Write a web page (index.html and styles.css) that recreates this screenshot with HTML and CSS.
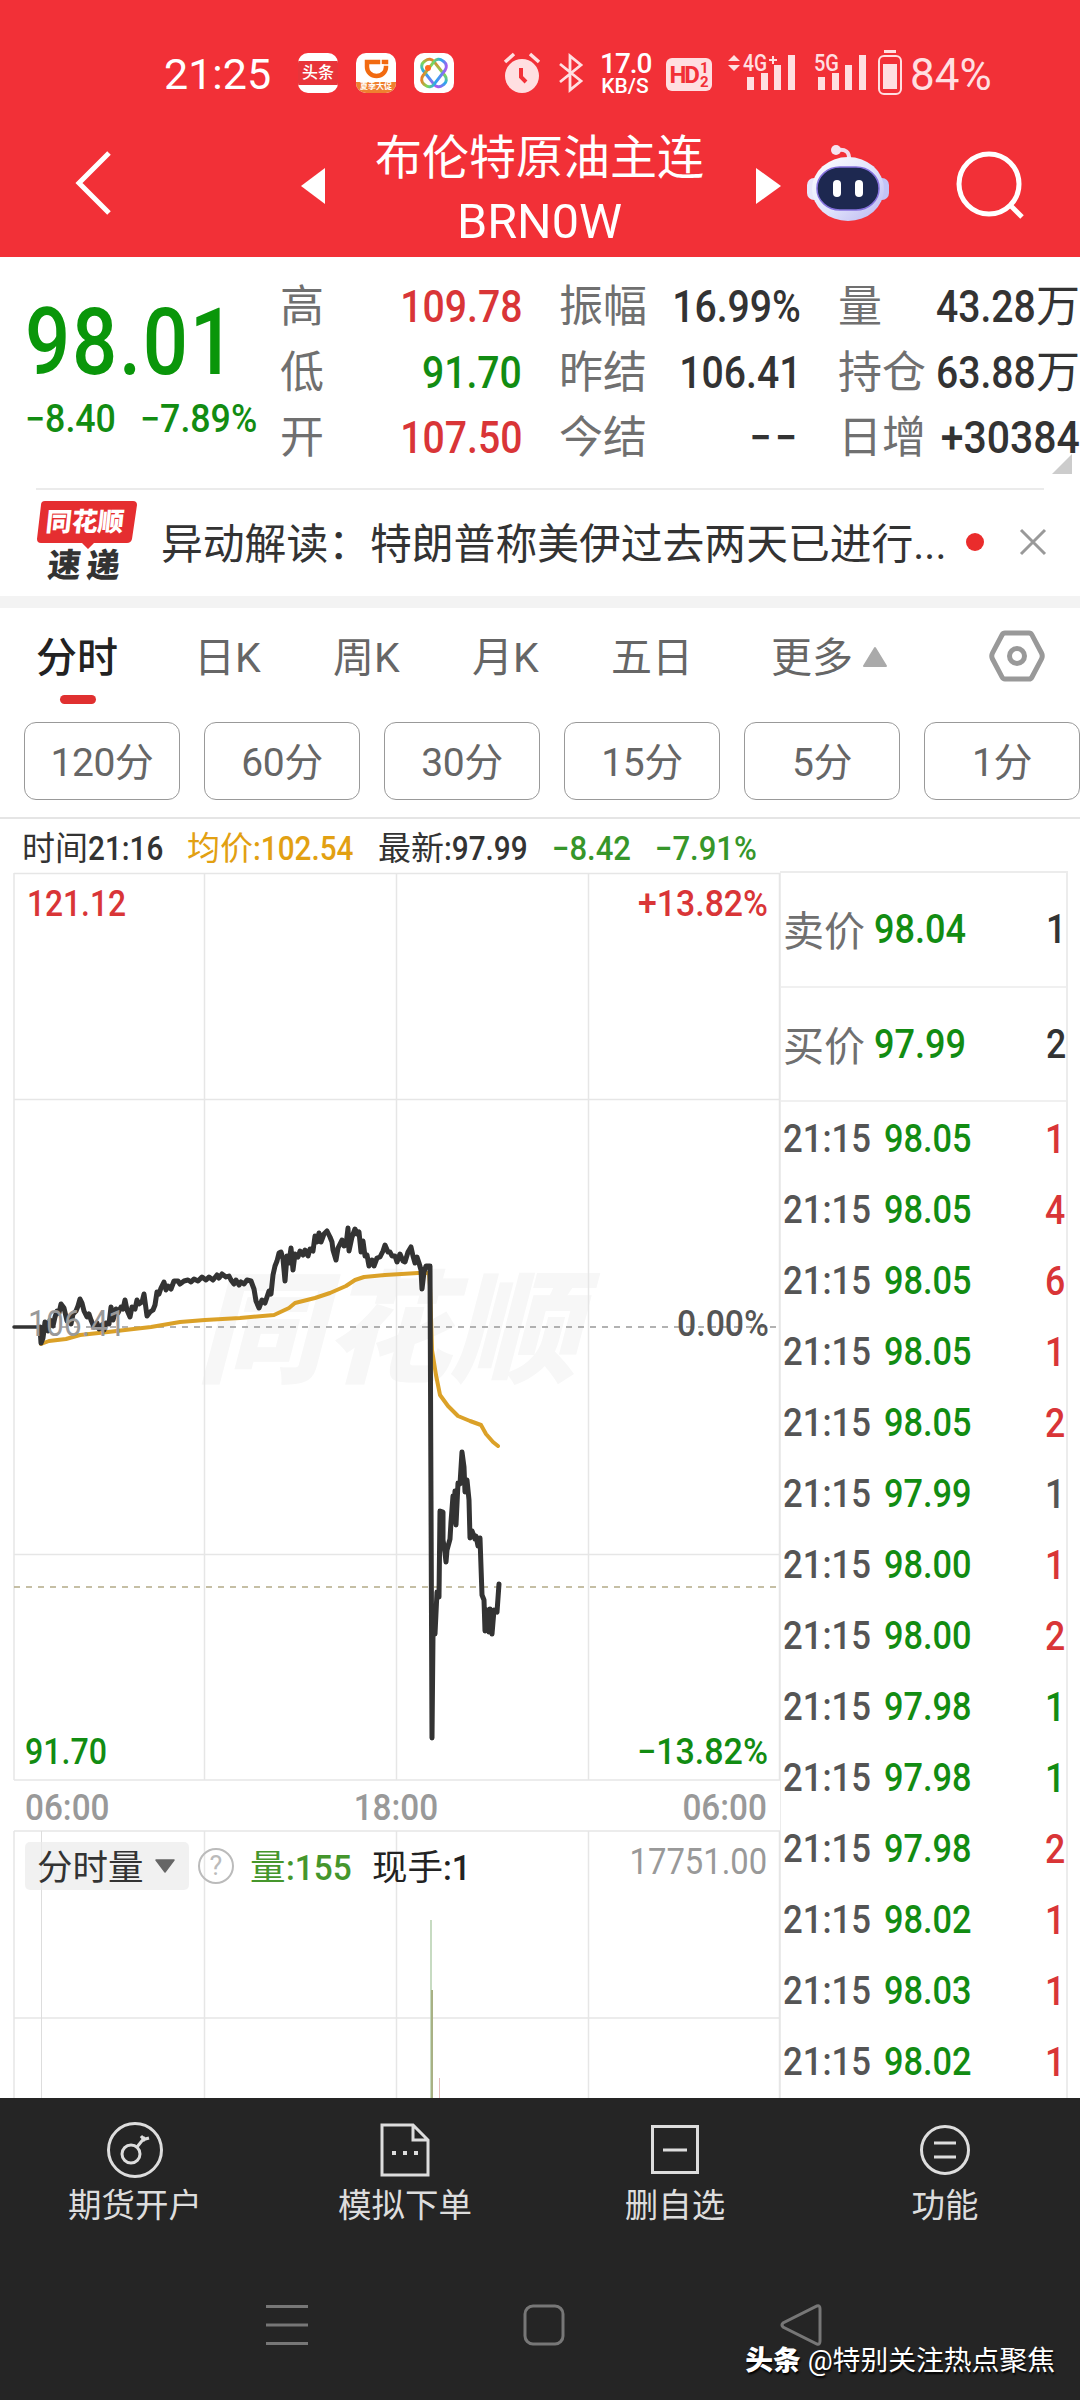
FILE: index.html
```html
<!DOCTYPE html>
<html lang="zh-CN">
<head>
    <meta charset="UTF-8">
    <meta name="viewport" content="width=device-width, initial-scale=1.0">
    <title>布伦特原油主连</title>
    <link rel="stylesheet" href="styles.css">
</head>
<body>

    <header class="top">
        <div class="status">
            <span class="clock">21:25</span>
            <div class="apps">
                <span class="app app-news"><b>头条</b></span>
                <span class="app app-ride">
                    <svg width="40" height="40" viewBox="0 0 40 40"><path d="M11 9h19v5a9.500 9 0 0 1-19 0z" fill="none" stroke="#f26a10" stroke-width="4.500"/><path d="M25 6v6h8" fill="none" stroke="#fff" stroke-width="1.5"/></svg>
                    <b>夏季大促</b>
                </span>
                <span class="app">
                    <svg width="40" height="40" viewBox="0 0 40 40">
                        <defs><linearGradient id="rainbow" x1="0" y1="0" x2="1" y2="1"><stop offset="0" stop-color="#ff6a20"/><stop offset=".35" stop-color="#7ed957"/><stop offset=".65" stop-color="#28a8f0"/><stop offset="1" stop-color="#c04cf0"/></linearGradient></defs>
                        <g fill="none" stroke="url(#rainbow)" stroke-width="3"><rect x="5" y="13" width="30" height="14" rx="6" transform="rotate(52 20 20)"/><rect x="5" y="13" width="30" height="14" rx="6" transform="rotate(-52 20 20)"/></g>
                        <circle cx="14" cy="15" r="3" fill="#ff6a20"/>
                    </svg>
                </span>
            </div>
            <svg class="alarm" width="36" height="42" viewBox="0 0 36 42"><circle cx="18" cy="24" r="17" fill="#ffdfe1"/><path d="M1 10l9-8M35 10l-9-8" stroke="#ffdfe1" stroke-width="3.5"/><path d="M17 16v9l5 5" fill="none" stroke="#f23037" stroke-width="4"/></svg>
            <svg class="bluetooth" width="24" height="38" viewBox="0 0 24 38"><path d="M1 10l21 17-11 9V2l11 9L1 28" fill="none" stroke="#ffdfe1" stroke-width="2.8"/></svg>
            <span class="speed"><b>17.0</b><i>KB/S</i></span>
            <span class="hd"><b>HD</b><i>1<br>2</i></span>
            <svg class="signal signal-4g" width="70" height="40" viewBox="0 0 70 40">
                <path d="M1 8l6-6 6 6zM1 12l6 6 6-6z"/>
                <text x="16" y="18" textLength="24" lengthAdjust="spacingAndGlyphs">4G</text><path d="M42 6h3V3h2v3h3v2h-3v3h-2V8h-3z"/>
                <path d="M20 24h7v13h-7zM34 20h7v17h-7zM47 12h7v25h-7zM61 2h7v35h-7z"/>
            </svg>
            <svg class="signal signal-5g" width="54" height="40" viewBox="0 0 54 40">
                <text x="0" y="18" textLength="25" lengthAdjust="spacingAndGlyphs">5G</text>
                <path d="M4 24h7v13H4zM18 20h7v17h-7zM31 12h7v25h-7zM45 2h7v35h-7z"/>
            </svg>
            <svg class="battery" width="24" height="46" viewBox="0 0 24 46"><path d="M6 1.500h12" stroke="#ffdfe1" stroke-width="3"/><rect x="1" y="6" width="22" height="38" rx="5" fill="none" stroke="#ffdfe1" stroke-width="2"/><rect x="5" y="14" width="14" height="25" fill="#ffdfe1"/></svg>
            <span class="percent">84%</span>
        </div>
        <div class="title-bar">
            <svg class="back" width="36" height="64" viewBox="0 0 36 64"><path d="M34 2L4 32l30 30" fill="none" stroke="#fff" stroke-width="5"/></svg>
            <svg class="prev" width="24" height="36" viewBox="0 0 24 36"><path d="M24 0v36L0 18z" fill="#fff"/></svg>
            <h1 class="title">布伦特原油主连<br><span>BRN0W</span></h1>
            <svg class="next" width="25" height="36" viewBox="0 0 25 36"><path d="M0 0v36l25-18z" fill="#fff"/></svg>
            <svg class="robot" width="82" height="76" viewBox="0 0 82 76">
                <defs>
                    <linearGradient id="shell" x1="0" y1="0" x2="1" y2="1"><stop offset="0" stop-color="#fff"/><stop offset=".55" stop-color="#dfe2fb"/><stop offset="1" stop-color="#b9b4f0"/></linearGradient>
                </defs>
                <path d="M30 5q13-2 12 10" fill="none" stroke="#f3dcec" stroke-width="4"/><circle cx="29" cy="5" r="5" fill="#f6e4f0"/>
                <rect x="0" y="33" width="16" height="22" rx="7" fill="#e8e6fb"/><rect x="66" y="33" width="16" height="22" rx="7" fill="#c2c4f6"/>
                <ellipse cx="41" cy="44" rx="36" ry="32" fill="url(#shell)"/>
                <rect x="10" y="22" width="62" height="43" rx="23" ry="21" fill="#1d2850" stroke="#8571dd" stroke-width="1.500"/>
                <rect x="26" y="35" width="8" height="17" rx="4" fill="#fff"/><rect x="48" y="35" width="8" height="17" rx="4" fill="#fff"/>
            </svg>
            <svg class="search" width="70" height="70" viewBox="0 0 70 70"><circle cx="33" cy="33" r="30" fill="none" stroke="#fff" stroke-width="5"/><path d="M54 54l12 12" stroke="#fff" stroke-width="5"/></svg>
        </div>
    </header>

    <section class="quote">
        <div class="price">
            <div class="last"><span class="num">98.01</span></div>
            <div class="change"><span class="num">−8.40</span><span class="num">−7.89%</span></div>
        </div>
        <dl class="stats stats-a">
            <dt>高</dt><dd class="up"><span class="num">109.78</span></dd>
            <dt>低</dt><dd class="down"><span class="num">91.70</span></dd>
            <dt>开</dt><dd class="up"><span class="num">107.50</span></dd>
        </dl>
        <dl class="stats stats-b">
            <dt>振幅</dt><dd><span class="num">16.99%</span></dd>
            <dt>昨结</dt><dd><span class="num">106.41</span></dd>
            <dt>今结</dt><dd><span class="num dash">−−</span></dd>
        </dl>
        <dl class="stats stats-c">
            <dt>量</dt><dd><span class="num">43.28</span>万</dd>
            <dt>持仓</dt><dd><span class="num">63.88</span>万</dd>
            <dt>日增</dt><dd><span class="num wide">+30384</span></dd>
        </dl>
        <span class="corner"></span>
    </section>

    <section class="news">
        <div class="news-logo">
            <svg width="100" height="58" viewBox="0 0 100 58"><path d="M8 0h88q4 0 4 4l-5 34q-1 4-5 4H57l-6 6-6-6H4q-4 0-4-4L4 4q0-4 4-4z" fill="#e52e30"/></svg>
            <b class="logo-a">同花顺</b>
            <b class="logo-b">速递</b>
        </div>
        <p class="headline">异动解读：特朗普称美伊过去两天已进行...</p>
        <span class="dot"></span>
        <svg class="close" width="28" height="28" viewBox="0 0 28 28"><path d="M2 2l24 24M26 2L2 26" stroke="#999" stroke-width="3"/></svg>
    </section>

    <nav class="tabs">
        <span class="tab active">分时</span>
        <span class="tab">日K</span>
        <span class="tab">周K</span>
        <span class="tab">月K</span>
        <span class="tab">五日</span>
        <span class="tab more">更多<svg width="26" height="22" viewBox="0 0 26 22"><path d="M13 2l11 18H2z" fill="#aaa" stroke="#aaa" stroke-width="2" stroke-linejoin="round"/></svg></span>
        <svg class="gear" width="56" height="52" viewBox="0 0 56 52"><path d="M16 3h24q2 0 3 2l9.500 18q1.500 3 0 6L43 47q-1 2-3 2H16q-2 0-3-2L3.500 29q-1.500-3 0-6L13 5q1-2 3-2z" fill="none" stroke="#999" stroke-width="5"/><circle cx="28" cy="26" r="7.500" fill="none" stroke="#999" stroke-width="5"/></svg>
    </nav>

    <div class="periods">
        <span class="period">120分</span>
        <span class="period">60分</span>
        <span class="period">30分</span>
        <span class="period">15分</span>
        <span class="period">5分</span>
        <span class="period">1分</span>
    </div>

    <div class="info">
        <span class="info-time">时间<span class="num">21:16</span></span>
        <span class="info-avg">均价<span class="num">:102.54</span></span>
        <span class="info-last">最新<span class="num">:97.99</span></span>
        <span class="info-diff"><span class="num">−8.42</span></span>
        <span class="info-rate"><span class="num">−7.91%</span></span>
    </div>

    <main class="board">
        <div class="charts">
            <svg class="price-chart" width="780" height="910" viewBox="0 871 780 910">
                <text class="watermark" x="196" y="1373" textLength="382" lengthAdjust="spacingAndGlyphs">同花顺</text>
                <g class="grid">
                    <path d="M14 873.500H780M14 1099.500H780M14 1554.500H780M14 1780H780"/>
                    <path d="M14 873V1780M204.500 873V1780M396.500 873V1780M588.500 873V1780M779.500 873V1780"/>
                </g>
                <path d="M14 1327H776" stroke="#999" stroke-width="1.500" stroke-dasharray="6 6"/>
                <path d="M14 1587H776" stroke="#b3aa88" stroke-width="1.500" stroke-dasharray="6 6"/>
                <g fill="none" stroke-linejoin="round" stroke-linecap="round">
                    <polyline stroke="#dba128" stroke-width="4" points="41,1344 49,1341 66,1339 80,1335 108,1332 125,1330 151,1327 180,1322 205,1320 240,1318 274,1315 289,1308 295,1303 315,1298 330,1293 346,1286 355,1280 364,1277 385,1275 418,1273 429,1273 430,1286 432,1350 436,1375 440,1395 448,1406 458,1416 470,1421 481,1425 486,1434 493,1442 498,1446"/>
                    <path d="M14 1327H41" stroke="#333" stroke-width="3.500"/>
                    <polyline stroke="#333" stroke-width="5" points="40,1327 41,1343 43,1338 45,1322 48,1331 50,1320 53,1326 55,1317 57,1311 59,1313 61,1304 64,1308 67,1321 69,1318 71,1324 73,1314 76,1311 78,1306 80,1299 82,1303 84,1311 87,1317 89,1314 91,1320 94,1327 97,1323 99,1329 102,1325 104,1330 106,1323 109,1324 111,1307 113,1320 116,1309 118,1313 121,1307 123,1309 125,1300 127,1310 130,1317 132,1307 135,1309 137,1300 139,1304 142,1302 144,1294 147,1316 150,1312 153,1310 155,1305 157,1292 159,1294 161,1288 164,1282 166,1290 168,1286 171,1289 174,1281 178,1281 180,1284 184,1281 188,1280 191,1282 194,1279 198,1281 202,1277 206,1280 209,1277 213,1280 217,1275 219,1278 222,1274 226,1277 229,1276 231,1280 234,1284 236,1280 239,1285 241,1282 244,1284 247,1280 251,1281 254,1289 256,1301 259,1308 262,1300 265,1303 267,1297 269,1291 271,1294 273,1275 275,1266 277,1261 279,1253 281,1252 283,1259 285,1281 287,1256 289,1263 291,1248 293,1270 295,1254 298,1257 300,1251 303,1255 305,1250 308,1256 310,1249 313,1251 315,1236 317,1242 319,1233 321,1242 324,1234 327,1231 330,1237 332,1242 333,1250 336,1260 338,1248 340,1244 342,1240 344,1246 346,1245 348,1228 349,1251 352,1237 355,1229 357,1234 359,1232 361,1252 363,1241 365,1256 367,1255 369,1266 372,1260 374,1266 377,1258 380,1257 383,1251 385,1245 388,1252 390,1252 392,1256 395,1256 397,1262 400,1254 403,1261 405,1262 408,1252 411,1247 413,1256 415,1263 417,1257 419,1263 421,1270 422,1289 424,1272 426,1266 430,1266 431,1500 432,1738 433,1635 434,1625 435,1634 437,1592 439,1597 440,1511 443,1512 443,1540 445,1553 446,1562 447,1550 450,1539 451,1522 453,1496 454,1509 455,1491 456,1525 458,1483 460,1484 462,1452 464,1467 465,1492 467,1480 469,1500 470,1538 472,1531 475,1539 476,1536 478,1546 480,1538 482,1595 484,1600 485,1631 487,1610 489,1632 490,1609 492,1634 494,1610 497,1612 499,1584"/>
                    <path d="M486 1612V1628M490 1612V1628M441 1515V1535M454 1496V1515" stroke="#333" stroke-width="4"/>
                </g>
                <g class="axis">
                    <text class="up" x="27" y="916" textLength="99" lengthAdjust="spacingAndGlyphs">121.12</text>
                    <text class="up" x="638" y="916" textLength="130" lengthAdjust="spacingAndGlyphs">+13.82%</text>
                    <text class="base" x="28" y="1336" textLength="98" lengthAdjust="spacingAndGlyphs">106.41</text>
                    <text class="zero" x="677" y="1336" textLength="92" lengthAdjust="spacingAndGlyphs">0.00%</text>
                    <text class="down" x="25" y="1764" textLength="82" lengthAdjust="spacingAndGlyphs">91.70</text>
                    <text class="down" x="637" y="1764" textLength="131" lengthAdjust="spacingAndGlyphs">−13.82%</text>
                </g>
            </svg>
            <div class="hours">
                <span class="num">06:00</span>
                <span class="num">18:00</span>
                <span class="num">06:00</span>
            </div>
            <div class="volume">
                <svg class="volume-chart" width="780" height="268" viewBox="0 1830 780 268">
                    <path class="grid" d="M14 1831H780M14 2018H780M14 1831V2098M204.500 1831V2098M396.500 1831V2098M588.500 1831V2098M779.500 1831V2098"/>
                    <path d="M41.500 1831V2098" stroke="#ddd"/>
                    <path d="M431 1920V2098" stroke="#b5cfae" stroke-width="1.500"/>
                    <path d="M432 1990V2098" stroke="#a8b184" stroke-width="2"/>
                    <path d="M439.500 2078V2098" stroke="#e5bcbc"/>
                </svg>
                <div class="volume-head">
                    <span class="chip">分时量<svg width="22" height="15" viewBox="0 0 22 15"><path d="M2 1h18l-9 12z" fill="#666" stroke="#666" stroke-width="1.500" stroke-linejoin="round"/></svg></span>
                    <span class="help">?</span>
                    <span class="vol">量<span class="num">:155</span></span>
                    <span class="hand">现手<span class="num">:1</span></span>
                    <span class="max"><span class="num">17751.00</span></span>
                </div>
            </div>
        </div>

        <aside class="book">
            <div class="offer"><span>卖价</span><b class="num down">98.04</b><i class="num">1</i></div>
            <div class="offer"><span>买价</span><b class="num down">97.99</b><i class="num">2</i></div>
            <div class="tick"><span class="num">21:15</span><b class="num down">98.05</b><i class="num up">1</i></div>
            <div class="tick"><span class="num">21:15</span><b class="num down">98.05</b><i class="num up">4</i></div>
            <div class="tick"><span class="num">21:15</span><b class="num down">98.05</b><i class="num up">6</i></div>
            <div class="tick"><span class="num">21:15</span><b class="num down">98.05</b><i class="num up">1</i></div>
            <div class="tick"><span class="num">21:15</span><b class="num down">98.05</b><i class="num up">2</i></div>
            <div class="tick"><span class="num">21:15</span><b class="num down">97.99</b><i class="num">1</i></div>
            <div class="tick"><span class="num">21:15</span><b class="num down">98.00</b><i class="num up">1</i></div>
            <div class="tick"><span class="num">21:15</span><b class="num down">98.00</b><i class="num up">2</i></div>
            <div class="tick"><span class="num">21:15</span><b class="num down">97.98</b><i class="num down">1</i></div>
            <div class="tick"><span class="num">21:15</span><b class="num down">97.98</b><i class="num down">1</i></div>
            <div class="tick"><span class="num">21:15</span><b class="num down">97.98</b><i class="num up">2</i></div>
            <div class="tick"><span class="num">21:15</span><b class="num down">98.02</b><i class="num up">1</i></div>
            <div class="tick"><span class="num">21:15</span><b class="num down">98.03</b><i class="num up">1</i></div>
            <div class="tick"><span class="num">21:15</span><b class="num down">98.02</b><i class="num up">1</i></div>
        </aside>
    </main>

    <footer class="bottom">
        <div class="actions">
            <div class="action">
                <svg width="58" height="58" viewBox="0 0 58 58"><circle cx="29" cy="29" r="26.500"/><circle cx="25" cy="33" r="9"/><path d="M31 26l8-10M39 20l-4-5M36 19l7-2" /></svg>
                期货开户
            </div>
            <div class="action">
                <svg width="58" height="58" viewBox="0 0 58 58"><path d="M6 4h31l15 15v35H6zM37 4v15h15"/><path d="M16 30h4v4h-4zM27 30h4v4h-4zM38 30h4v4h-4z" fill="#ddd" stroke="none"/></svg>
                模拟下单
            </div>
            <div class="action">
                <svg width="58" height="58" viewBox="0 0 58 58"><path d="M6.500 5.500h45v46h-45zM17 29h24"/></svg>
                删自选
            </div>
            <div class="action">
                <svg width="58" height="58" viewBox="0 0 58 58"><circle cx="29" cy="29" r="23.500"/><path d="M18 22h22M18 36h22"/></svg>
                功能
            </div>
        </div>
        <div class="system-nav">
            <svg width="42" height="42" viewBox="0 0 42 42"><path d="M0 2.500h42M0 21h42M0 39.500h42"/></svg>
            <svg width="42" height="42" viewBox="0 0 42 42"><rect x="2" y="2" width="38" height="38" rx="8"/></svg>
            <svg width="42" height="42" viewBox="0 0 42 42"><path d="M37 2q3-1 3 3v32q0 4-3 3L3 23q-2-2 0-4z"/></svg>
        </div>
        <p class="credit"><b>头条</b> @特别关注热点聚焦</p>
    </footer>

</body>
</html>
```
FILE: styles.css
```css
* {
    box-sizing: border-box;
}
body {
    margin: 0;
    width: 1080px;
    height: 2400px;
    overflow: hidden;
    background: #fff;
    color: #333;
    font-family: Roboto, "Noto Sans CJK SC", sans-serif;
}
svg {
    display: block;
    flex: none;
    overflow: visible;
}
i {
    font-style: normal;
}
/* narrow digits, squeezed towards the left edge by default */
.num {
    display: inline-block;
    transform: scaleX(0.87);
    transform-origin: left center;
    font-weight: 500;
    white-space: nowrap;
}
.up {
    color: #d93537;
    fill: #d93537;
}
.down {
    color: #128c12;
    fill: #128c12;
}

/* header */
.top {
    height: 257px;
    background: #f23037;
    color: #fff;
}
.status {
    display: flex;
    align-items: center;
    height: 146px;
    padding-left: 164px;
    color: #ffdfe1;
}
.clock {
    width: 134px;
    margin-top: 2px;
    font-size: 43px;
    color: #fff;
}
.apps {
    display: flex;
    gap: 18px;
    width: 206px;
}
.app {
    position: relative;
    width: 40px;
    height: 40px;
    border-radius: 10px;
    background: #fff;
    overflow: hidden;
}
.app-news b {
    display: block;
    margin-top: 8px;
    height: 24px;
    line-height: 23px;
    background: #e8343a;
    color: #fff;
    font-size: 16px;
    font-weight: 500;
    text-align: center;
}
.app-ride b {
    position: absolute;
    left: 0;
    bottom: 0;
    width: 40px;
    height: 11px;
    line-height: 10px;
    background: #ef8030;
    color: #fff;
    font-size: 8px;
    text-align: center;
}
.bluetooth {
    margin-left: 19px;
}
.speed {
    display: flex;
    flex-direction: column;
    width: 50px;
    margin: 2px 0 0 17px;
    color: #fff;
    text-align: center;
}
.speed b {
    font-size: 28px;
    line-height: 23px;
    font-weight: 500;
    letter-spacing: -1px;
}
.speed i {
    font-size: 21px;
    line-height: 22px;
    font-weight: 500;
}
.hd {
    display: flex;
    justify-content: center;
    align-items: center;
    width: 46px;
    height: 33px;
    margin: 3px 0 0 16px;
    border-radius: 6px;
    background: #ffdfe1;
    color: #f23037;
}
.hd b {
    font-size: 24px;
    letter-spacing: -2px;
}
.hd i {
    margin-left: 2px;
    font-size: 15px;
    line-height: 14px;
    font-weight: 700;
}
.signal {
    fill: #ffdfe1;
    font-size: 23px;
    font-weight: 500;
}
.signal-4g {
    margin-left: 15px;
}
.signal-5g {
    margin-left: 17px;
}
.battery {
    margin-left: 10px;
}
.percent {
    margin: 4px 0 0 8px;
    font-size: 44px;
}
.title-bar {
    display: flex;
    height: 111px;
    padding-left: 75px;
}
.back {
    margin-top: 5px;
}
.prev {
    margin: 22px 0 0 190px;
}
.title {
    width: 429px;
    margin: -20px 2px 0 0;
    font-size: 47px;
    line-height: 64px;
    font-weight: 400;
    text-align: center;
}
.title span {
    font-size: 48.500px;
}
.next {
    margin-top: 22px;
}
.robot {
    margin: -1px 0 0 26px;
}
.search {
    margin: 5px 0 0 67px;
}

/* quote */
.quote {
    position: relative;
    display: flex;
    height: 231px;
    padding-top: 17px;
}
.price {
    width: 280px;
    padding-left: 25px;
    color: #128c12;
}
.last {
    height: 106px;
    margin-top: 16px;
    font-size: 92px;
    line-height: 106px;
}
.last .num {
    color: #0a960a;
    letter-spacing: 2px;
    transform: scaleX(0.865);
}
.change {
    display: flex;
    font-size: 38px;
    line-height: 46px;
}
.change .num {
    width: 115px;
    transform: scaleX(0.94);
}
.stats {
    display: grid;
    grid-template-columns: auto 1fr;
    grid-auto-rows: 65.5px;
    margin: 0;
    font-size: 44px;
    line-height: 66px;
}
.stats dt {
    color: #707070;
}
.stats dd {
    margin: 0;
    text-align: right;
    white-space: nowrap;
}
.stats .num {
    transform-origin: right center;
    font-size: 45px;
}
.stats .wide {
    transform: scaleX(0.91);
}
.stats .dash {
    letter-spacing: 4px;
}
.stats-a {
    width: 242px;
}
.stats-b {
    width: 242px;
    margin-left: 37px;
}
.stats-c {
    width: 242px;
    margin-left: 37px;
}
.stats-c dd {
    margin-left: -30px;
}
.corner {
    position: absolute;
    right: 8px;
    bottom: 14px;
    border-left: 20px solid transparent;
    border-bottom: 20px solid #ccc;
}

/* news strip */
.news {
    display: flex;
    align-items: center;
    height: 120px;
    padding-left: 37px;
    border-bottom: 12px solid #f3f3f3;
    background: linear-gradient(#ebebeb, #ebebeb) 36px 0 / 1008px 2px no-repeat;
}
.news-logo {
    position: relative;
    width: 100px;
    height: 82px;
}
.logo-a, .logo-b {
    position: absolute;
    white-space: nowrap;
    font-weight: 900;
}
.logo-a {
    left: 9px;
    top: 4px;
    font-size: 26px;
    line-height: 34px;
    color: #fff;
    transform: skewX(-6deg);
}
.logo-b {
    left: 11px;
    top: 46px;
    font-size: 33px;
    line-height: 38px;
    letter-spacing: 6px;
    transform: skewX(-6deg);
}
.headline {
    width: 800px;
    margin: 0 0 3px 24px;
    font-size: 41.800px;
    white-space: nowrap;
}
.dot {
    width: 18px;
    height: 18px;
    margin-left: 5px;
    border-radius: 50%;
    background: #ea2c2c;
}
.close {
    margin-left: 35px;
}

/* period tabs */
.tabs {
    display: flex;
    height: 114px;
    padding-left: 36px;
    font-size: 41px;
    line-height: 60px;
    color: #666;
}
.tab {
    width: 139px;
    padding-top: 20px;
    white-space: nowrap;
}
.tab:nth-child(1) {
    width: 158px;
}
.tab:nth-child(5) {
    width: 160px;
}
.active {
    position: relative;
    color: #222;
    font-weight: 500;
}
.active::after {
    content: "";
    position: absolute;
    left: 24px;
    top: 87px;
    width: 36px;
    height: 9px;
    border-radius: 5px;
    background: #e03030;
}
.more {
    display: flex;
    width: 218px;
}
.more svg {
    margin: 18px 0 0 9px;
}
.gear {
    margin: 22px 0 0 0;
}
.periods {
    display: flex;
    gap: 24px;
    height: 97px;
    padding-left: 24px;
    border-bottom: 2px solid #e5e5e5;
}
.period {
    flex: none;
    width: 156px;
    height: 78px;
    border: 1.500px solid #999;
    border-radius: 12px;
    font-size: 39px;
    line-height: 80px;
    letter-spacing: -0.500px;
    text-align: center;
    color: #666;
}

/* chart line info */
.info {
    display: flex;
    height: 52px;
    padding-left: 22px;
    font-size: 33px;
    line-height: 60px;
}
.info > span {
    white-space: nowrap;
}
.info .num {
    transform: scaleX(0.9);
}
.info-time {
    width: 165px;
}
.info-avg {
    width: 191px;
    color: #e2a012;
}
.info-last {
    width: 174px;
}
.info-diff {
    width: 103px;
}
.info-diff, .info-rate {
    color: #36962a;
}
.info-diff .num, .info-rate .num {
    transform: scaleX(0.94);
}

/* board */
.board {
    display: flex;
    height: 1227px;
    overflow: hidden;
}
.charts {
    width: 780px;
}
.grid {
    fill: none;
    stroke: #e6e6e6;
    stroke-width: 1.500px;
}
.watermark {
    font-size: 122px;
    font-weight: 900;
    font-style: italic;
    fill: #f7f7f7;
}
.axis {
    font-size: 36px;
    font-weight: 500;
}
.axis .base {
    fill: #999;
    font-weight: 400;
}
.axis .zero {
    fill: #555;
}
.hours {
    display: flex;
    justify-content: space-between;
    height: 49px;
    padding: 0 13px 0 25px;
    font-size: 37px;
    line-height: 53px;
    color: #999;
}
.hours .num {
    transform: scaleX(0.9);
}
.hours .num:nth-child(2) {
    transform-origin: center;
}
.hours .num:last-child {
    transform-origin: right center;
}
.volume {
    position: relative;
}
.volume-head {
    position: absolute;
    left: 25px;
    top: 12px;
    display: flex;
    align-items: center;
    width: 742px;
    height: 48px;
    font-size: 35.500px;
}
.volume-head > span {
    line-height: 46px;
}
.volume-head .num {
    transform: scaleX(0.94);
}
.chip {
    display: flex;
    align-items: center;
    justify-content: space-between;
    width: 164px;
    height: 48px;
    padding: 3px 13px 0 12px;
    border-radius: 5px;
    background: rgba(235, 235, 235, 0.7);
}
.chip svg {
    margin-top: -3px;
}
.volume-head .help {
    width: 36px;
    height: 36px;
    margin-left: 9px;
    border: 2.500px solid #bbb;
    border-radius: 50%;
    font-size: 27px;
    line-height: 32px;
    text-align: center;
    color: #bbb;
}
.vol {
    width: 122px;
    margin: 3px 0 0 16px;
    color: #45962c;
}
.hand {
    margin-top: 3px;
    color: #222;
}
.max {
    margin: -9px 0 0 auto;
    color: #999;
}
.max .num {
    transform: scaleX(0.91);
    transform-origin: right center;
    font-size: 36px;
    font-weight: 400;
}

/* order book */
.book {
    width: 288px;
    border: solid #ececec;
    border-width: 2px 2px 0 1px;
    font-size: 39px;
}
.offer, .tick {
    display: flex;
    align-items: center;
    padding: 2px 0 0 2px;
}
.offer {
    height: 114.500px;
    padding-top: 0;
    border-bottom: 2px solid #f0f0f0;
    font-size: 41px;
    color: #707070;
}
.tick {
    height: 71px;
    color: #555;
}
.offer span {
    width: 91px;
    margin-top: -2px;
}
.tick span {
    width: 101px;
    transform: scaleX(0.89);
}
.offer b, .tick b {
    transform: scaleX(0.88);
}
.offer i, .tick i {
    margin-left: auto;
    margin-right: 1px;
    font-size: 41px;
    transform-origin: right center;
}
.offer i {
    color: #333;
    margin-right: 0;
}

/* footer */
.bottom {
    position: relative;
    height: 302px;
    background: #252525;
}
.actions {
    display: flex;
    padding-top: 23px;
}
.action {
    display: flex;
    flex-direction: column;
    align-items: center;
    width: 270px;
    font-size: 33.500px;
    line-height: 54px;
    color: #ddd;
}
.action svg {
    fill: none;
    stroke: #ddd;
    stroke-width: 3px;
}
.system-nav {
    display: flex;
    justify-content: space-between;
    padding: 71px 258px 0 266px;
}
.system-nav svg {
    fill: none;
    stroke: #777;
    stroke-width: 3px;
}
.credit {
    position: absolute;
    right: 25px;
    bottom: 19px;
    margin: 0;
    font-size: 27.800px;
    line-height: 40px;
    color: #fff;
    text-shadow: 1px 2px 2px #000;
    white-space: nowrap;
}
.credit b {
    font-weight: 900;
}
```
